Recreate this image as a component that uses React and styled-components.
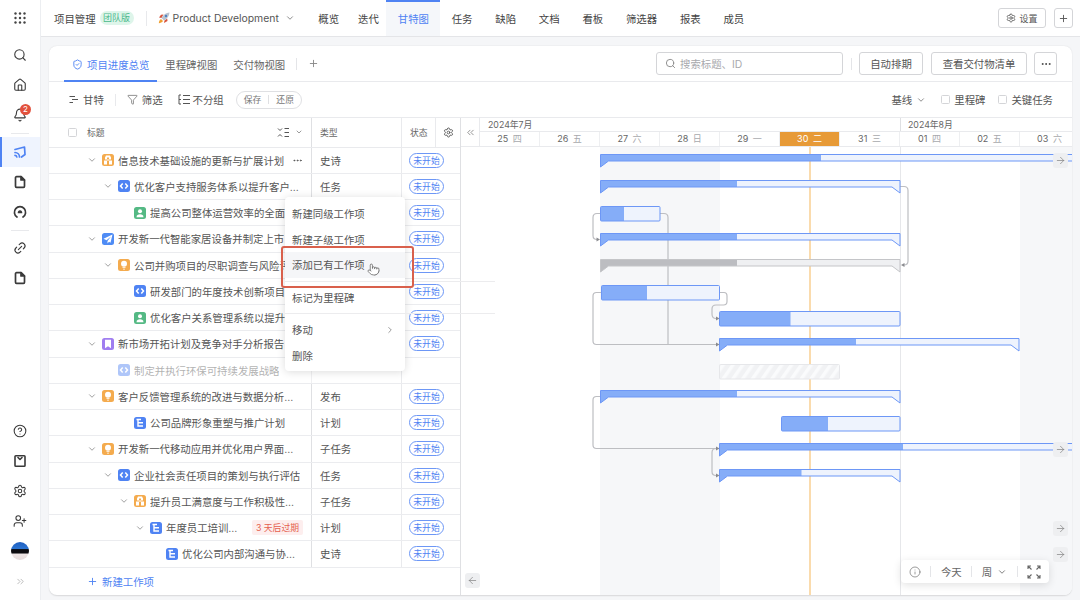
import React from 'react'
import styled, { createGlobalStyle } from 'styled-components'
import {
  Search,
  House,
  Bell,
  Link2,
  CircleHelp,
  Settings,
  UserPlus,
  ChevronsRight,
  ChevronsLeft,
  ChevronDown,
  ChevronRight,
  Plus,
  Ellipsis,
  Funnel,
  Info,
  ArrowRight,
  Pointer,
  ShieldCheck
} from 'lucide-react'

const BLUE = '#4f83f3'

const TAB_DAYS = [
  ['25', '四'],
  ['26', '五'],
  ['27', '六'],
  ['28', '日'],
  ['29', '一'],
  ['30', '二'],
  ['31', '三'],
  ['01', '四'],
  ['02', '五'],
  ['03', '六']
]

const NAV = ['概览', '迭代', '甘特图', '任务', '缺陷', '文档', '看板', '筛选器', '报表', '成员']

const ROWS = [
  { level: 0, kind: 'gift', title: '信息技术基础设施的更新与扩展计划', type: '史诗', more: true },
  { level: 1, kind: 'code', title: '优化客户支持服务体系以提升客户…', type: '任务' },
  { level: 2, kind: 'person', title: '提高公司整体运营效率的全面', leaf: true },
  { level: 0, kind: 'plane', title: '开发新一代智能家居设备并制定上市' },
  { level: 1, kind: 'bulb', title: '公司并购项目的尽职调查与风险评' },
  { level: 2, kind: 'code', title: '研发部门的年度技术创新项目', leaf: true },
  { level: 2, kind: 'person', title: '优化客户关系管理系统以提升', leaf: true },
  { level: 0, kind: 'bookmark', title: '新市场开拓计划及竞争对手分析报告' },
  { level: 1, kind: 'code', title: '制定并执行环保可持续发展战略', leaf: true, faded: true },
  { level: 0, kind: 'bulb', title: '客户反馈管理系统的改进与数据分析…', type: '发布' },
  { level: 2, kind: 'tree', title: '公司品牌形象重塑与推广计划', type: '计划', leaf: true },
  { level: 0, kind: 'bulb', title: '开发新一代移动应用并优化用户界面…', type: '子任务' },
  { level: 1, kind: 'code', title: '企业社会责任项目的策划与执行评估', type: '任务' },
  { level: 2, kind: 'gift', title: '提升员工满意度与工作积极性…', type: '子任务' },
  { level: 3, kind: 'tree', title: '年度员工培训…', type: '计划', expired: '3 天后过期' },
  { level: 4, kind: 'tree', title: '优化公司内部沟通与协…', type: '史诗', leaf: true }
]

const BARS = [
  { kind: 'sum', x: 600.5, end: 1082, fill: 821, y: 154.5 },
  { kind: 'sum', x: 600.5, end: 900, fill: 737, y: 180.5 },
  { kind: 'task', x: 600.5, end: 660, fill: 624, y: 206.5 },
  { kind: 'sum', x: 600.5, end: 900, fill: 737, y: 233.5 },
  { kind: 'sum', x: 600.5, end: 900, fill: 737, y: 259.5, gray: true },
  { kind: 'task', x: 601.5, end: 719.5, fill: 647, y: 285.5 },
  { kind: 'task', x: 719.5, end: 900, fill: 790.5, y: 311.5 },
  { kind: 'sum', x: 719.5, end: 1082, fill: 856, y: 338.5, cut: 1019 },
  { kind: 'sum', x: 600.5, end: 900, fill: 737, y: 390.5 },
  { kind: 'task', x: 781.5, end: 900, fill: 828, y: 416.5 },
  { kind: 'sum', x: 719.5, end: 1082, fill: 903, y: 443.5 },
  { kind: 'sum', x: 719.5, end: 900, fill: 801.5, y: 469.5 }
]

const LINKS = [
  'M660 213.5H664Q668 213.5 668 217.5V344.5',
  'M600 213.5H597Q593 213.5 593 217.5V235.5Q593 239.5 597 239.5H599',
  'M900 186.5H904Q908 186.5 908 190.5V261Q908 265 904 265H903',
  'M720 292.5H724Q727 292.5 727 296V301.5Q727 305 723.5 305H716Q712 305 712 309V314Q712 318.5 716 318.5H718',
  'M601 292.5H596.5Q593 292.5 593 296V341Q593 344.5 596.5 344.5H718',
  'M600 396.5H596.5Q593 396.5 593 400V445Q593 448.5 596.5 448.5H718',
  'M719 448.5H716Q712 448.5 712 452.5V471.5Q712 475.5 716 475.5H718'
]

const HEADS = [
  '600,239.5 596.5,237.5 596.5,241.5',
  '901,265 904.5,263 904.5,267',
  '719.5,318.5 716,316.5 716,320.5',
  '719.5,344.5 716,342.5 716,346.5',
  '719.5,448.5 716,446.5 716,450.5',
  '719.5,475.5 716,473.5 716,477.5'
]

const GlobalStyle = createGlobalStyle`
  html, body {
    margin: 0;
    height: 100%;
    overflow: hidden;
    background: #f5f6f8;
  }
  body {
    font-family: Inter, "Noto Sans CJK SC", sans-serif;
    font-size: 10.4px;
    color: #555;
  }
  * {
    box-sizing: border-box;
  }
`

function Doc() {
  return (
    <svg width="14" height="14" viewBox="0 0 14 14" fill="none" stroke="#3a3a3a" strokeWidth="1.7">
      <path d="M8 1.7H3.5a1 1 0 0 0-1 1v8.6a1 1 0 0 0 1 1h7a1 1 0 0 0 1-1V5z" strokeLinejoin="round" />
      <path d="M8 1.7L11.5 5H8z" fill="#3a3a3a" strokeLinejoin="round" />
    </svg>
  )
}

function Cast() {
  return (
    <svg width="14" height="14" viewBox="0 0 14 14" fill="none" stroke={BLUE} strokeWidth="1.7">
      <path d="M2 4.5L11.5 2l.5 7.5-3.5 2.5" strokeLinejoin="round" strokeLinecap="round" />
      <path d="M2 7.5a4.5 4.5 0 0 1 4.5 4.5M2 10.3A1.8 1.8 0 0 1 3.8 12" strokeLinecap="round" />
    </svg>
  )
}

function Gauge() {
  return (
    <svg width="14" height="14" viewBox="0 0 14 14" fill="none" stroke="#3a3a3a" strokeWidth="1.7">
      <path d="M4 12A5.6 5.6 0 1 1 10 12" strokeLinecap="round" />
      <path d="M4.8 8.2a2.3 2.3 0 1 1 4.4 0z" fill="#3a3a3a" stroke="none" />
    </svg>
  )
}

function Inbox() {
  return (
    <svg width="14" height="14" viewBox="0 0 14 14" fill="none" stroke="#3a3a3a" strokeWidth="1.6">
      <rect x="2" y="1.7" width="10" height="10.6" rx="0.8" />
      <path d="M5 3.5L7 5.5 9 3.5" strokeLinecap="round" strokeLinejoin="round" />
    </svg>
  )
}

function Grid() {
  const dots = []
  for (let r = 0; r < 3; r++) {
    for (let c = 0; c < 3; c++) {
      dots.push(<circle key={`${r}-${c}`} cx={2.5 + c * 4.5} cy={2.5 + r * 4.5} r="1.2" fill="#444" />)
    }
  }
  return (
    <svg width="14" height="14" viewBox="0 0 14 14">
      {dots}
    </svg>
  )
}

function Rocket() {
  return (
    <svg width="12" height="12" viewBox="0 0 12 12">
      <path d="M3 2.8L5.5 2.5 3.5 6 1 5.5z" fill="#d9553e" />
      <path d="M9.2 6.5L9.5 9 6 11 6.5 8.5z" fill="#d9553e" />
      <path d="M11.5.5C8 .8 5.5 2.5 3.5 6L6 8.5C9.5 6.5 11.2 4 11.5.5z" fill="#b9c3d0" />
      <circle cx="8" cy="4" r="1.2" fill="#4f83c3" />
      <path d="M3 7L5 9C4 10.5 2.5 11 .8 11.2 1 9.5 1.5 8 3 7z" fill="#f0a030" />
    </svg>
  )
}

function GanttGlyph() {
  return (
    <svg width="11" height="11" viewBox="0 0 11 11" fill="none" stroke="#555" strokeWidth="1.1">
      <path d="M1.5 2.5H7M4 5.5H10M1.5 8.5H5" />
    </svg>
  )
}

function GroupGlyph() {
  return (
    <svg width="13" height="11" viewBox="0 0 13 11" fill="none" stroke="#555" strokeWidth="1">
      <path d="M3 1H1V10H3M1 5.5H3M5 1.5H12M5 5.5H12M5 9.5H12" />
    </svg>
  )
}

function SortGlyph() {
  return (
    <svg width="13" height="11" viewBox="0 0 13 11" fill="none" stroke="#555" strokeWidth="1">
      <path d="M1 1.5L3 3.5 5 1.5M1 9.5L3 7.5 5 9.5M7.5 1.5H12M7.5 5.5H12M7.5 9.5H12" />
    </svg>
  )
}

function ExpandGlyph() {
  return (
    <svg width="14" height="14" viewBox="0 0 14 14" fill="none" stroke="#666" strokeWidth="1.1">
      <path d="M1 4V1H4M1 1L4.5 4.5M13 4V1H10M13 1L9.5 4.5M1 10V13H4M1 13L4.5 9.5M13 10V13H10M13 13L9.5 9.5" />
    </svg>
  )
}

const ROW_GLYPHS = {
  gift: (
    <path d="M2 6.5H10V10.5H2zM3 3.5H9V5.5H3zM5 3.5V10.5H7V3.5zM4 1.5H8L9 3.5H3z" fill="#fff" fillRule="evenodd" />
  ),
  code: (
    <path d="M4.7 3.5L2.5 6 4.7 8.5M7.3 3.5L9.5 6 7.3 8.5" fill="none" stroke="#fff" strokeWidth="1.5" />
  ),
  person: (
    <>
      <circle cx="6" cy="4.3" r="2" fill="#fff" />
      <path d="M2.5 10.2C2.5 8 4 7.2 6 7.2s3.5.8 3.5 3z" fill="#fff" />
    </>
  ),
  plane: <path d="M10.5 1.5L1.5 5.8 4.5 7.2 9 3.5 5.5 8v2.5L7 8.8 8.5 9.7z" fill="#fff" />,
  bulb: (
    <>
      <circle cx="6" cy="4.8" r="3" fill="#fff" />
      <path d="M4.5 8.2H7.5V9H4.5zM5 9.7H7V10.5H5z" fill="#fff" />
    </>
  ),
  bookmark: <path d="M3 1.8H9V10.3L6 8.3 3 10.3z" fill="#fff" />,
  tree: (
    <path d="M2.5 2.5H7M4 2.5V9H9M4 5.8H9" fill="none" stroke="#fff" strokeWidth="1.4" />
  )
}

const ROW_COLORS = {
  gift: '#f4ab4e',
  code: '#4f83f3',
  person: '#54b984',
  plane: '#4f8cf5',
  bulb: '#f4ab4e',
  bookmark: '#a07ef0',
  tree: '#4f83f3'
}

function GanttBar({ bar, id }) {
  const { kind, x, end, fill, y, gray, cut } = bar
  const right = cut || end
  const stroke = gray ? '#c4c5c8' : '#6d97f6'
  const solid = gray ? '#bcbdc1' : '#85adf8'
  const light = gray ? '#eff0f2' : '#eef3fd'
  if (kind === 'task') {
    return (
      <g>
        <clipPath id={id}>
          <rect x={x} y={y} width={fill - x} height={15} />
        </clipPath>
        <rect x={x} y={y} width={right - x} height={14.5} rx="1" fill={light} />
        <rect x={x} y={y} width={right - x} height={14.5} rx="1" fill={solid} clipPath={`url(#${id})`} />
        <rect x={x} y={y} width={right - x} height={14.5} rx="1" fill="none" stroke={stroke} />
      </g>
    )
  }
  const pts = `${x},${y} ${right},${y} ${right},${y + 12.5} ${right - 8},${y + 6.5} ${x + 8},${y + 6.5} ${x},${y + 12.5}`
  return (
    <g>
      <clipPath id={id}>
        <rect x={x} y={y - 1} width={fill - x} height={15} />
      </clipPath>
      <polygon points={pts} fill={light} />
      <polygon points={pts} fill={solid} clipPath={`url(#${id})`} />
      <polygon points={pts} fill="none" stroke={stroke} strokeLinejoin="round" />
    </g>
  )
}

function GanttChart() {
  return (
    <ChartSvg viewBox="461 147 611 448">
      <defs>
        <pattern id="hatch" width="8" height="8" patternUnits="userSpaceOnUse" patternTransform="rotate(35)">
          <rect width="8" height="8" fill="#f1f2f4" />
          <rect width="3.5" height="8" fill="#fafbfc" />
        </pattern>
      </defs>
      <rect x="600" y="147" width="120" height="448" fill="#f6f7f9" />
      <rect x="1020" y="147" width="52" height="448" fill="#f6f7f9" />
      <path d="M900.5 147V595" stroke="#e6e7ea" />
      <path d="M810 147V595" stroke="#f8cf92" strokeWidth="1.5" />
      <g fill="none" stroke="#bdbec2" strokeWidth="1.2">
        {LINKS.map(d => (
          <path key={d} d={d} />
        ))}
      </g>
      <g fill="#8a8b8f">
        {HEADS.map(p => (
          <polygon key={p} points={p} />
        ))}
      </g>
      {BARS.map((bar, i) => (
        <GanttBar key={bar.y} bar={bar} id={`bar-${i}`} />
      ))}
      <rect x="719.5" y="364.5" width="120" height="14.5" rx="1" fill="url(#hatch)" stroke="#e6e7ea" />
    </ChartSvg>
  )
}

function TableRow({ row }) {
  const { level, kind, title, type, more, leaf, faded, expired } = row
  return (
    <Row>
      <TitleCell $level={level} $faded={faded}>
        <Caret $hidden={leaf}>
          <ChevronDown size={10} strokeWidth={1.5} />
        </Caret>
        <RowIcon $color={ROW_COLORS[kind]}>
          <svg width="12" height="12" viewBox="0 0 12 12">
            {ROW_GLYPHS[kind]}
          </svg>
        </RowIcon>
        <TitleText>{title}</TitleText>
        {more && (
          <MoreMark>
            <Ellipsis size={11} />
          </MoreMark>
        )}
        {expired && <Expired>{expired}</Expired>}
      </TitleCell>
      <TypeCell>{type}</TypeCell>
      <StatusCell>{!faded && <StatusPill>未开始</StatusPill>}</StatusCell>
    </Row>
  )
}

export default function App() {
  return (
    <>
      <GlobalStyle />
      <Page>
        <Sidebar>
          <SideItem>
            <Grid />
          </SideItem>
          <SideGroup>
            <SideItem>
              <Search size={14} strokeWidth={1.9} />
            </SideItem>
            <SideItem>
              <House size={14} strokeWidth={1.9} />
            </SideItem>
            <SideItem>
              <Bell size={14} strokeWidth={1.9} />
              <NoticeBadge>2</NoticeBadge>
            </SideItem>
          </SideGroup>
          <SideDivider />
          <SideItem $active>
            <Cast />
          </SideItem>
          <SideItem>
            <Doc />
          </SideItem>
          <SideItem>
            <Gauge />
          </SideItem>
          <SideDivider />
          <SideItem>
            <Link2 size={14} strokeWidth={1.9} style={{ transform: 'rotate(-45deg)' }} />
          </SideItem>
          <SideItem>
            <Doc />
          </SideItem>
          <SideSpacer />
          <SideItem>
            <CircleHelp size={14} strokeWidth={1.8} />
          </SideItem>
          <SideItem>
            <Inbox />
          </SideItem>
          <SideItem>
            <Settings size={14} strokeWidth={1.8} />
          </SideItem>
          <SideItem>
            <UserPlus size={14} strokeWidth={1.8} />
          </SideItem>
          <SideItem>
            <Avatar />
          </SideItem>
          <SideItem>
            <ChevronsRight size={11} color="#999" strokeWidth={1.4} />
          </SideItem>
        </Sidebar>

        <Main>
          <TopBar>
            <ProjectName>项目管理</ProjectName>
            <PlanBadge>团队版</PlanBadge>
            <BarDivider />
            <Workspace>
              <Rocket />
              <span>Product Development</span>
              <ChevronDown size={10} color="#777" />
            </Workspace>
            <Nav>
              {NAV.map((item, i) => (
                <NavItem key={item} $active={item === '甘特图'} $tight={i < 2}>
                  {item}
                </NavItem>
              ))}
            </Nav>
            <TopActions>
              <OutlineButton $w={48} $h={20} $small>
                <Settings size={10} />
                设置
              </OutlineButton>
              <OutlineButton $w={19} $h={20}>
                <Plus size={11} />
              </OutlineButton>
            </TopActions>
          </TopBar>

          <Content>
            <Card>
              <TabRow>
                <Tab $active>
                  <ShieldCheck size={11} />
                  项目进度总览
                </Tab>
                <Tab>里程碑视图</Tab>
                <Tab>交付物视图</Tab>
                <TabDivider />
                <Plus size={11} color="#888" />
                <TabActions>
                  <SearchBox>
                    <Search size={11} color="#888" />
                    搜索标题、ID
                  </SearchBox>
                  <ActionDivider />
                  <OutlineButton $w={64} $h={23}>
                    自动排期
                  </OutlineButton>
                  <OutlineButton $w={96} $h={23}>
                    查看交付物清单
                  </OutlineButton>
                  <MoreButton $w={23} $h={23}>
                    <Ellipsis size={12} color="#444" />
                  </MoreButton>
                </TabActions>
              </TabRow>

              <Toolbar>
                <ToolItem>
                  <GanttGlyph />
                  甘特
                </ToolItem>
                <ToolDivider />
                <ToolItem>
                  <Funnel size={11} strokeWidth={1.4} />
                  筛选
                </ToolItem>
                <ToolItem $tight>
                  <GroupGlyph />
                  不分组
                </ToolItem>
                <SavePill>
                  <span>保存</span>
                  <PillDivider />
                  <span>还原</span>
                </SavePill>
                <ToolRight>
                  <BaselineItem>
                    基线
                    <ChevronDown size={10} color="#777" />
                  </BaselineItem>
                  <ToolItem>
                    <Checkbox />
                    里程碑
                  </ToolItem>
                  <ToolItem>
                    <Checkbox />
                    关键任务
                  </ToolItem>
                </ToolRight>
              </Toolbar>

              <TableArea>
                <LeftPanel>
                  <HeadRow>
                    <HeadTitle>
                      <Checkbox />
                      <span>标题</span>
                      <SortBox>
                        <SortGlyph />
                        <ChevronDown size={8} />
                      </SortBox>
                    </HeadTitle>
                    <HeadCell>类型</HeadCell>
                    <HeadCell>状态</HeadCell>
                    <GearCell>
                      <Settings size={11} strokeWidth={1.7} />
                    </GearCell>
                  </HeadRow>
                  {ROWS.map(row => (
                    <TableRow key={row.title} row={row} />
                  ))}
                  <Footer>
                    <Plus size={11} />
                    新建工作项
                  </Footer>
                </LeftPanel>

                <RightPanel>
                  <TimeHead>
                    <CollapseCell>
                      <ChevronsLeft size={11} strokeWidth={1.5} />
                    </CollapseCell>
                    <TimeScale>
                      <Months>
                        <Month $w={420}>2024年7月</Month>
                        <Month $w={172} $next>
                          2024年8月
                        </Month>
                      </Months>
                      <Days>
                        {TAB_DAYS.map(([num, week]) => (
                          <Day key={num} $today={num === '30'} $next={num === '01'}>
                            {num} <i>{week}</i>
                          </Day>
                        ))}
                      </Days>
                    </TimeScale>
                  </TimeHead>
                  <Chart>
                    <GanttChart />
                    {[6, 295, 374, 400].map(top => (
                      <ScrollChip key={top} $top={top}>
                        <ArrowRight size={11} strokeWidth={1.4} />
                      </ScrollChip>
                    ))}
                    <BackChip>
                      <ArrowRight size={11} strokeWidth={1.4} style={{ transform: 'rotate(180deg)' }} />
                    </BackChip>
                    <ZoomBar>
                      <Info size={12} strokeWidth={1.3} />
                      <ZoomDivider />
                      <ZoomLabel>今天</ZoomLabel>
                      <ZoomDivider />
                      <WeekPick>
                        周
                        <ChevronDown size={10} />
                      </WeekPick>
                      <ZoomDivider />
                      <ExpandGlyph />
                    </ZoomBar>
                  </Chart>
                </RightPanel>
              </TableArea>

              <ContextMenu>
                <MenuItem>新建同级工作项</MenuItem>
                <MenuItem>新建子级工作项</MenuItem>
                <MenuItem $hover>添加已有工作项</MenuItem>
                <MenuDivider />
                <MenuItem>标记为里程碑</MenuItem>
                <MenuDivider />
                <MenuItem>
                  移动
                  <ChevronRight size={10} color="#888" />
                </MenuItem>
                <MenuItem>删除</MenuItem>
              </ContextMenu>
              <Highlight />
              <HandCursor>
                <Pointer size={13} fill="#fff" strokeWidth={1.2} />
              </HandCursor>
            </Card>
          </Content>
        </Main>
      </Page>
    </>
  )
}

const Page = styled.div`
  display: flex;
  width: 1080px;
  height: 600px;
`

const Sidebar = styled.aside`
  width: 41px;
  flex: none;
  display: flex;
  flex-direction: column;
  background: #fff;
  border-right: 1px solid #eceef1;
  padding: 3px 0 4px;
  color: #3a3a3a;
`

const SideGroup = styled.div`
  display: flex;
  flex-direction: column;
  margin-top: 7px;
`

const SideItem = styled.div`
  position: relative;
  height: 30px;
  flex: none;
  display: flex;
  align-items: center;
  justify-content: center;
  ${p => p.$active && `
    background: #eff4fe;
    box-shadow: inset 2px 0 0 ${BLUE};
  `}
`

const NoticeBadge = styled.span`
  position: absolute;
  top: 4px;
  left: 20px;
  width: 11px;
  height: 11px;
  border-radius: 50%;
  background: #e2513d;
  color: #fff;
  font-size: 8px;
  line-height: 11px;
  text-align: center;
`

const SideDivider = styled.div`
  height: 1px;
  flex: none;
  margin: 3px 11px 2.6px;
  background: #e8e9ec;
`

const SideSpacer = styled.div`
  flex: 1;
`

const Avatar = styled.div`
  width: 18px;
  height: 18px;
  border-radius: 50%;
  background: linear-gradient(#1f5fc0 0, #2b74d2 38%, #0c0c10 42%, #0c0c10 62%, #efe6e6 66%, #e6dcdc 100%);
`

const Main = styled.div`
  flex: 1;
  min-width: 0;
  display: flex;
  flex-direction: column;
`

const TopBar = styled.header`
  height: 37px;
  flex: none;
  display: flex;
  align-items: center;
  padding-left: 13px;
  background: #fff;
  border-bottom: 1px solid #e4e5e8;
`

const ProjectName = styled.span`
  color: #444;
`

const PlanBadge = styled.span`
  margin-left: 4px;
  width: 34px;
  height: 14px;
  border-radius: 7px;
  background: #def5ea;
  color: #4bb98a;
  font-size: 9px;
  line-height: 14px;
  text-align: center;
`

const BarDivider = styled.span`
  width: 1px;
  height: 15px;
  margin: 0 11px 0 12px;
  background: #e8e9ec;
`

const Workspace = styled.div`
  display: flex;
  align-items: center;
  gap: 3px;
  color: #555;
  & svg:last-child {
    margin-left: 3px;
  }
`

const Nav = styled.nav`
  display: flex;
  align-self: stretch;
  margin-left: 14px;
`

const NavItem = styled.span`
  display: flex;
  align-items: center;
  padding: 0 ${p => (p.$tight ? '9.5px' : '11.4px')};
  color: ${p => (p.$active ? BLUE : '#444')};
  background: ${p => (p.$active ? '#f5f7fa' : 'transparent')};
  box-shadow: ${p => (p.$active ? `inset 0 2px 0 ${BLUE}` : 'none')};
  margin-left: ${p => (p.$active ? '-2px' : '0')};
`

const TopActions = styled.div`
  margin-left: auto;
  padding-right: 7px;
  display: flex;
  gap: 8px;
`

const OutlineButton = styled.button`
  width: ${p => p.$w}px;
  height: ${p => p.$h}px;
  display: flex;
  align-items: center;
  justify-content: center;
  gap: 3px;
  padding: 0;
  background: #fff;
  border: 1px solid #d4d5d8;
  border-radius: 3px;
  color: #555;
  font: inherit;
  font-size: ${p => (p.$small ? '9px' : '10.4px')};
`

const MoreButton = styled(OutlineButton)`
  margin-left: -1px;
`

const Content = styled.div`
  flex: 1;
  min-height: 0;
  padding: 9px 8px 5px;
`

const Card = styled.section`
  position: relative;
  height: 100%;
  display: flex;
  flex-direction: column;
  background: #fff;
  border-radius: 8px;
  box-shadow: 0 0.5px 1.5px rgba(0, 0, 0, 0.12);
`

const TabRow = styled.div`
  height: 36px;
  flex: none;
  display: flex;
  align-items: center;
  padding: 0 15px;
  border-bottom: 1px solid #e9eaed;
`

const Tab = styled.div`
  align-self: stretch;
  display: flex;
  align-items: center;
  gap: 4px;
  padding: 0 8px;
  color: ${p => (p.$active ? BLUE : '#666')};
  box-shadow: ${p => (p.$active ? `inset 0 -2px 0 ${BLUE}` : 'none')};
  margin-bottom: -1px;
`

const TabDivider = styled.span`
  width: 1px;
  height: 12px;
  margin: 0 11px 0 3px;
  background: #e4e5e8;
`

const TabActions = styled.div`
  margin-left: auto;
  display: flex;
  align-items: center;
  gap: 8px;
`

const ActionDivider = styled.span`
  width: 1px;
  height: 12px;
  margin: 0 -0.5px;
  background: #e4e5e8;
`

const SearchBox = styled.div`
  width: 187px;
  height: 23px;
  display: flex;
  align-items: center;
  gap: 4px;
  padding-left: 8px;
  border: 1px solid #d4d5d8;
  border-radius: 3px;
  color: #a8a9ad;
`

const Toolbar = styled.div`
  height: 36px;
  flex: none;
  display: flex;
  align-items: center;
  gap: 15px;
  padding: 0 19px;
  border-bottom: 1px solid #e9eaed;
`

const ToolItem = styled.div`
  display: flex;
  align-items: center;
  gap: ${p => (p.$tight ? 2 : 4)}px;
  color: #555;
`

const BaselineItem = styled(ToolItem)`
  margin-right: 2px;
`

const ToolDivider = styled.span`
  width: 1px;
  height: 12px;
  margin: 0 -4px;
  background: #e8e9ec;
`

const SavePill = styled.div`
  display: flex;
  align-items: center;
  gap: 7px;
  height: 18px;
  padding: 0 7px;
  margin-left: -3px;
  border: 1px solid #dfe0e3;
  border-radius: 9px;
  color: #777;
  font-size: 8.8px;
`

const PillDivider = styled.span`
  width: 1px;
  height: 9px;
  background: #dfe0e3;
`

const ToolRight = styled.div`
  margin-left: auto;
  display: flex;
  align-items: center;
  gap: 13px;
`

const Checkbox = styled.span`
  width: 9px;
  height: 9px;
  flex: none;
  border: 1px solid #d4d5d8;
  border-radius: 1.5px;
  background: #fff;
`

const TableArea = styled.div`
  flex: 1;
  min-height: 0;
  display: flex;
  overflow: hidden;
  border-radius: 0 0 8px 8px;
`

const LeftPanel = styled.div`
  width: 412px;
  flex: none;
  display: flex;
  flex-direction: column;
  border-right: 1px solid #dfe0e3;
`

const HeadRow = styled.div`
  height: 29.6px;
  flex: none;
  display: grid;
  grid-template-columns: 263px 90px 34px 1fr;
  border-bottom: 1px solid #e9eaed;
  color: #666;
  font-size: 8.8px;
`

const HeadTitle = styled.div`
  display: flex;
  align-items: center;
  gap: 10px;
  padding: 0 8px 0 19px;
  border-right: 1px solid #dfe0e3;
`

const SortBox = styled.div`
  margin-left: auto;
  display: flex;
  align-items: center;
  gap: 5px;
`

const HeadCell = styled.div`
  display: flex;
  align-items: center;
  padding-left: 8px;
  border-right: 1px solid #e9eaed;
`

const GearCell = styled.div`
  display: flex;
  align-items: center;
  justify-content: center;
  color: #444;
`

const Row = styled.div`
  height: 26.25px;
  flex: none;
  display: grid;
  grid-template-columns: 263px 90px 1fr;
  border-bottom: 1px solid #ebecef;
`

const TitleCell = styled.div`
  display: flex;
  align-items: center;
  min-width: 0;
  padding-left: ${p => 38 + p.$level * 16}px;
  padding-right: 8px;
  border-right: 1px solid #dfe0e3;
  opacity: ${p => (p.$faded ? 0.45 : 1)};
`

const Caret = styled.span`
  width: 10px;
  flex: none;
  display: flex;
  margin-right: 5px;
  color: #666;
  visibility: ${p => (p.$hidden ? 'hidden' : 'visible')};
`

const RowIcon = styled.span`
  width: 12px;
  height: 12px;
  flex: none;
  display: flex;
  margin-right: 4px;
  border-radius: 2.5px;
  background: ${p => p.$color};
`

const TitleText = styled.span`
  overflow: hidden;
  white-space: nowrap;
  flex: 0 1 auto;
`

const MoreMark = styled.span`
  flex: none;
  display: flex;
  margin-left: auto;
  color: #555;
`

const Expired = styled.span`
  flex: none;
  margin-left: auto;
  height: 15px;
  padding: 0 4px;
  border-radius: 2px;
  background: #fdeeee;
  color: #e5604d;
  font-size: 8.8px;
  line-height: 15px;
`

const TypeCell = styled.div`
  display: flex;
  align-items: center;
  padding-left: 8px;
  border-right: 1px solid #e9eaed;
`

const StatusCell = styled.div`
  display: flex;
  align-items: center;
  padding-left: 7px;
`

const StatusPill = styled.span`
  width: 35px;
  height: 15px;
  border: 1px solid #6d97f6;
  border-radius: 8px;
  color: ${BLUE};
  font-size: 8.8px;
  line-height: 13px;
  text-align: center;
`

const Footer = styled.div`
  flex: 1;
  display: flex;
  align-items: center;
  gap: 4px;
  padding-left: 38px;
  color: ${BLUE};
`

const RightPanel = styled.div`
  flex: 1;
  min-width: 0;
  display: flex;
  flex-direction: column;
`

const TimeHead = styled.div`
  height: 29px;
  flex: none;
  display: flex;
  border-bottom: 1px solid #e9eaed;
`

const CollapseCell = styled.div`
  width: 19px;
  flex: none;
  display: flex;
  align-items: center;
  justify-content: center;
  color: #666;
  border-right: 1px solid #e9eaed;
`

const TimeScale = styled.div`
  flex: 1;
  min-width: 0;
  display: flex;
  flex-direction: column;
  overflow: hidden;
`

const Months = styled.div`
  height: 14px;
  display: flex;
  border-bottom: 1px solid #e9eaed;
`

const Month = styled.div`
  width: ${p => p.$w}px;
  flex: none;
  padding-left: 8px;
  color: #666;
  font-size: 8.8px;
  line-height: 14px;
  ${p => p.$next && 'box-shadow: inset 1px 0 0 #dfe0e3;'}
`

const Days = styled.div`
  flex: 1;
  display: flex;
`

const Day = styled.div`
  width: 60px;
  flex: none;
  text-align: center;
  font-size: 9px;
  line-height: 14px;
  color: ${p => (p.$today ? '#fff' : '#666')};
  background: ${p => (p.$today ? '#e79a37' : 'transparent')};
  border-right: 1px solid #eeeff1;
  & i {
    font-style: normal;
    margin-left: 2px;
    color: ${p => (p.$today ? '#fff' : '#a8a9ad')};
  }
`

const Chart = styled.div`
  position: relative;
  flex: 1;
  min-height: 0;
`

const ChartSvg = styled.svg`
  display: block;
  width: 611px;
  height: 448px;
`

const ScrollChip = styled.span`
  position: absolute;
  right: 4px;
  top: ${p => p.$top}px;
  width: 15px;
  height: 15px;
  display: flex;
  align-items: center;
  justify-content: center;
  border-radius: 3px;
  background: #eeeff1;
  color: #777;
`

const BackChip = styled(ScrollChip)`
  right: auto;
  top: auto;
  left: 4px;
  bottom: 7px;
`

const ZoomBar = styled.div`
  position: absolute;
  right: 23px;
  bottom: 12px;
  width: 148px;
  height: 23px;
  display: flex;
  align-items: center;
  justify-content: space-between;
  padding: 0 8px;
  border-radius: 4px;
  background: #fff;
  color: #666;
  box-shadow: 0 2px 8px rgba(0, 0, 0, 0.12);
`

const ZoomLabel = styled.span`
  flex: none;
  white-space: nowrap;
`

const WeekPick = styled.span`
  flex: none;
  display: flex;
  align-items: center;
  gap: 5px;
  white-space: nowrap;
`

const ZoomDivider = styled.span`
  flex: none;
  width: 1px;
  height: 11px;
  background: #e4e5e8;
`

const ContextMenu = styled.div`
  position: absolute;
  left: 236px;
  top: 151px;
  width: 120px;
  height: 174px;
  padding: 4px 0;
  background: #fff;
  border-radius: 4px;
  box-shadow: 0 1px 8px rgba(0, 0, 0, 0.14);
  z-index: 2;
`

const MenuItem = styled.div`
  height: 25.5px;
  display: flex;
  align-items: center;
  justify-content: space-between;
  padding: 0 10px 0 7px;
  color: #555;
  background: ${p => (p.$hover ? '#f5f6f8' : 'transparent')};
`

const MenuDivider = styled.div`
  position: relative;
  height: 1px;
  margin: 3px 0;
  background: #ececee;
  &::after {
    content: '';
    position: absolute;
    left: 100%;
    top: 0;
    width: 90px;
    height: 1px;
    background: #ececee;
  }
`

const Highlight = styled.div`
  position: absolute;
  left: 232px;
  top: 200px;
  width: 133px;
  height: 42px;
  border: 2px solid #d9604c;
  border-radius: 3px;
  z-index: 3;
`

const HandCursor = styled.span`
  position: absolute;
  left: 318px;
  top: 217px;
  display: flex;
  color: #444;
  z-index: 4;
`
